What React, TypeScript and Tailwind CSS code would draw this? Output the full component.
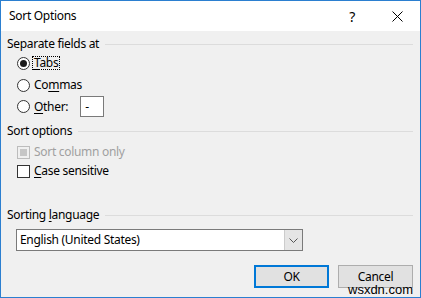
import React from "react";

const font = { fontFamily: '"Noto Sans", "Segoe UI", sans-serif', letterSpacing: "-0.3px" };

function Heading({ children }: { children: React.ReactNode }) {
  return (
    <div className="flex items-center h-[16px] pl-[6px] pr-[7px]">
      <span className="whitespace-nowrap">{children}</span>
      <div className="flex-1 h-px bg-[#dcdcdc] ml-[6px]" />
    </div>
  );
}

function Radio({ checked }: { checked?: boolean }) {
  return (
    <div className="w-[13px] h-[13px] rounded-full border border-[#333333] bg-white flex items-center justify-center">
      {checked && <div className="w-[7px] h-[7px] rounded-full bg-[#1a1a1a]" />}
    </div>
  );
}

export default function App() {
  return (
    <div
      className="relative w-[421px] h-[298px] border border-[#2b7fd0] bg-[#f0f0f0] text-[12px] text-black flex flex-col overflow-hidden"
      style={font}
    >
      <div className="h-[30px] bg-white flex items-center pl-[8px] shrink-0">
        <span className="text-[12px]">Sort Options</span>
        <span className="ml-auto mr-[37px] text-[14px]">?</span>
        <svg width="11" height="11" viewBox="0 0 11 11" className="mr-[17px]">
          <path d="M0.5 0.5 L10.5 10.5 M10.5 0.5 L0.5 10.5" stroke="#000" strokeWidth="1" />
        </svg>
      </div>

      <div className="mt-[5px]">
        <Heading>Separate fields at</Heading>
      </div>

      <div className="mt-[1px] h-[20px] flex items-center pl-[16px]">
        <Radio checked />
        <span className="ml-[2px] px-[1px] border border-dotted border-black leading-[12px] h-[14px]">
          <span className="underline underline-offset-2">T</span>abs
        </span>
      </div>

      <div className="mt-[2px] h-[20px] flex items-center pl-[16px]">
        <Radio />
        <span className="ml-[4px]">
          Co<span className="underline underline-offset-2">m</span>mas
        </span>
      </div>

      <div className="mt-[1px] h-[21px] flex items-center pl-[16px]">
        <Radio />
        <span className="ml-[4px]">
          <span className="underline underline-offset-2">O</span>ther:
        </span>
        <div className="ml-[12px] w-[24px] h-[21px] bg-white border border-[#7a7a7a] flex items-center pl-[4px]">
          -
        </div>
      </div>

      <div className="mt-[6px]">
        <Heading>Sort options</Heading>
      </div>

      <div className="mt-[5px] h-[16px] flex items-center pl-[16px]">
        <div className="w-[13px] h-[13px] border border-[#bcbcbc] bg-[#f0f0f0] flex items-center justify-center">
          <div className="w-[7px] h-[7px] bg-[#c6c6c6]" />
        </div>
        <span className="ml-[4px] text-[#a0a0a0]">Sort column only</span>
      </div>

      <div className="mt-[3px] h-[16px] flex items-center pl-[16px]">
        <div className="w-[13px] h-[13px] border border-[#333333] bg-white" />
        <span className="ml-[4px]">
          <span className="underline underline-offset-2">C</span>ase sensitive
        </span>
      </div>

      <div className="mt-[28px]">
        <Heading>
          Sorting <span className="underline underline-offset-2">l</span>anguage
        </Heading>
      </div>

      <div className="mt-[6px] ml-[15px] w-[287px] h-[22px] bg-white border border-[#7a7a7a] flex items-center">
        <span className="pl-[3px] flex-1">English (United States)</span>
        <div className="w-[18px] h-full bg-[#e5e5e5] border-l border-[#cccccc] flex items-center justify-center">
          <svg width="9" height="5" viewBox="0 0 9 5">
            <path d="M0.5 0.5 L4.5 4.5 L8.5 0.5" fill="none" stroke="#555" strokeWidth="1" />
          </svg>
        </div>
      </div>

      <div className="mt-[14px] flex pl-[253px] gap-[9px]">
        <div className="w-[75px] h-[23px] bg-[#e1e1e1] border-2 border-[#0078d7] flex items-center justify-center">
          OK
        </div>
        <div className="w-[75px] h-[23px] bg-[#e1e1e1] border border-[#adadad] flex items-center justify-center">
          Cancel
        </div>
      </div>

      <div
        className="absolute left-[347px] top-[282px] text-[13px] leading-[14px] text-black"
        style={{ fontFamily: '"Liberation Sans", Arial, sans-serif', letterSpacing: "0px" }}
      >
        wsxdn.com
      </div>
    </div>
  );
}
